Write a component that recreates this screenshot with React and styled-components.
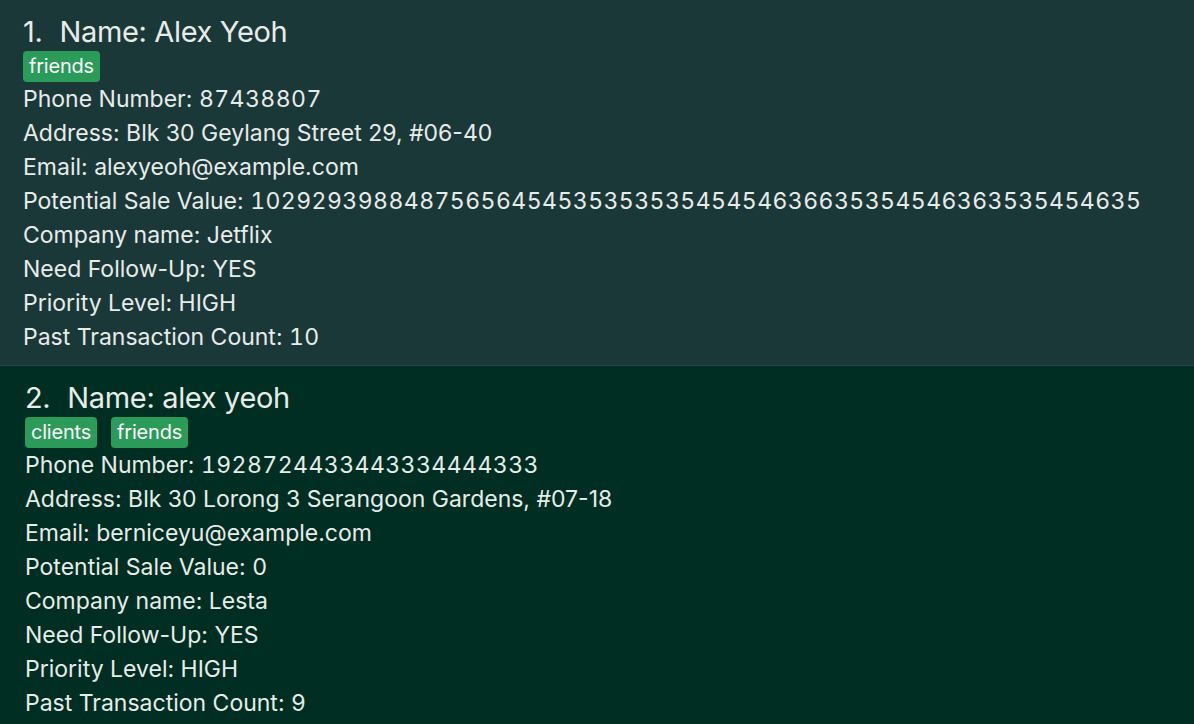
import React from 'react';
import styled, { createGlobalStyle } from 'styled-components';

const GlobalStyle = createGlobalStyle`
  html, body {
    margin: 0;
    padding: 0;
    background: #002e22;
  }
  body {
    font-family: Inter, Roboto, sans-serif;
    color: #e8ece9;
  }
`;

const List = styled.div`
  display: flex;
  flex-direction: column;
  width: 1194px;
  height: 724px;
  overflow: hidden;
`;

const Card = styled.div`
  display: flex;
  flex-direction: column;
  flex-shrink: 0;
  padding: 12px 0 11px ${({ selected }) => (selected ? '25px' : '23px')};
  background: ${({ selected }) => (selected ? '#002e22' : '#1b3839')};
  border-bottom: 1px solid ${({ selected }) => (selected ? 'transparent' : '#28494a')};
`;

const Header = styled.div`
  display: flex;
  align-items: center;
  gap: 17px;
  height: 38px;
  font-size: 29px;
  letter-spacing: -0.35px;
  white-space: nowrap;
`;

const Tags = styled.div`
  display: flex;
  align-items: center;
  gap: 14px;
  height: 32px;
`;

const Tag = styled.span`
  display: inline-flex;
  align-items: center;
  height: 31px;
  padding: 0 6px;
  background: #2a9b58;
  border-radius: 4px;
  color: #ffffff;
  font-size: 20px;
  letter-spacing: -0.2px;
`;

const Detail = styled.div`
  height: 34px;
  line-height: 34px;
  font-size: 23px;
  white-space: nowrap;
`;

const Num = styled.span`
  font-feature-settings: "tnum";
  letter-spacing: 0.45px;
`;

const people = [
  {
    name: 'Alex Yeoh',
    tags: ['friends'],
    phone: '87438807',
    address: 'Blk 30 Geylang Street 29, #06-40',
    email: 'alexyeoh@example.com',
    sale: '1029293988487565645453535353545454636635354546363535454635',
    company: 'Jetflix',
    followUp: 'YES',
    priority: 'HIGH',
    count: '10',
  },
  {
    name: 'alex yeoh',
    tags: ['clients', 'friends'],
    phone: '1928724433443334444333',
    address: 'Blk 30 Lorong 3 Serangoon Gardens, #07-18',
    email: 'berniceyu@example.com',
    sale: '0',
    company: 'Lesta',
    followUp: 'YES',
    priority: 'HIGH',
    count: '9',
    selected: true,
  },
];

const PersonCard = ({ person, index }) => (
  <Card selected={person.selected}>
    <Header>
      <span>{index}.</span>
      <span>Name: {person.name}</span>
    </Header>
    <Tags>
      {person.tags.map((t) => (
        <Tag key={t}>{t}</Tag>
      ))}
    </Tags>
    <Detail>Phone Number: <Num>{person.phone}</Num></Detail>
    <Detail>Address: {person.address}</Detail>
    <Detail>Email: {person.email}</Detail>
    <Detail>Potential Sale Value: <Num>{person.sale}</Num></Detail>
    <Detail>Company name: {person.company}</Detail>
    <Detail>Need Follow-Up: {person.followUp}</Detail>
    <Detail>Priority Level: {person.priority}</Detail>
    <Detail>Past Transaction Count: <Num>{person.count}</Num></Detail>
  </Card>
);

export default function App() {
  return (
    <>
      <GlobalStyle />
      <List>
        {people.map((p, i) => (
          <PersonCard key={i} person={p} index={i + 1} />
        ))}
      </List>
    </>
  );
}
